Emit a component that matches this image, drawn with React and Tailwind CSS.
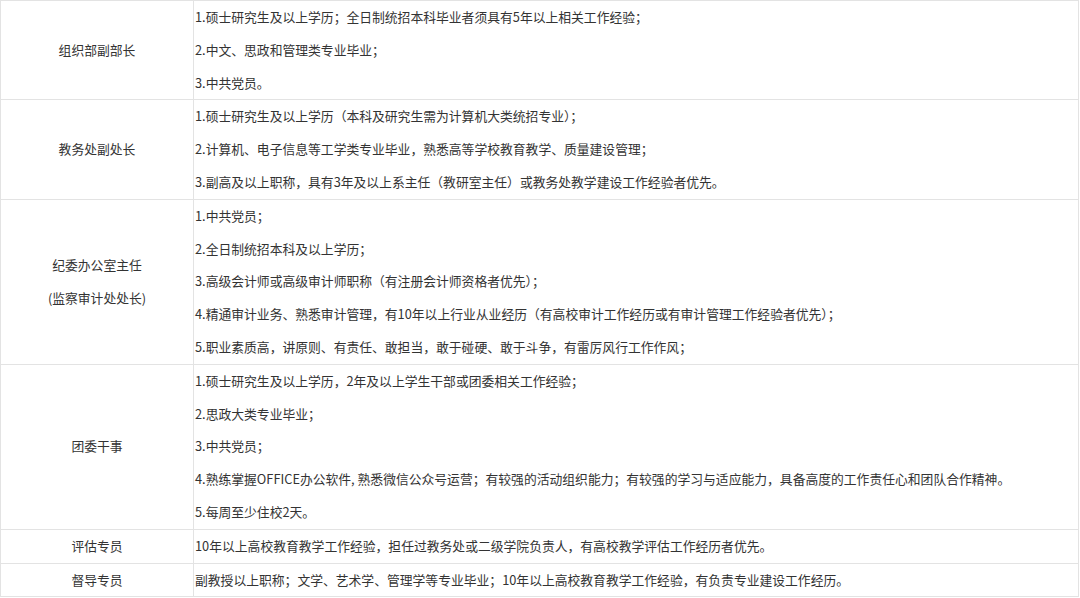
import React from "react";

const rows = [
  {
    title: ["组织部副部长"],
    items: [
      "1.硕士研究生及以上学历；全日制统招本科毕业者须具有5年以上相关工作经验；",
      "2.中文、思政和管理类专业毕业；",
      "3.中共党员。",
    ],
  },
  {
    title: ["教务处副处长"],
    items: [
      "1.硕士研究生及以上学历（本科及研究生需为计算机大类统招专业）；",
      "2.计算机、电子信息等工学类专业毕业，熟悉高等学校教育教学、质量建设管理；",
      "3.副高及以上职称，具有3年及以上系主任（教研室主任）或教务处教学建设工作经验者优先。",
    ],
  },
  {
    title: ["纪委办公室主任", "(监察审计处处长)"],
    items: [
      "1.中共党员；",
      "2.全日制统招本科及以上学历；",
      "3.高级会计师或高级审计师职称（有注册会计师资格者优先）；",
      "4.精通审计业务、熟悉审计管理，有10年以上行业从业经历（有高校审计工作经历或有审计管理工作经验者优先）；",
      "5.职业素质高，讲原则、有责任、敢担当，敢于碰硬、敢于斗争，有雷厉风行工作作风；",
    ],
  },
  {
    title: ["团委干事"],
    items: [
      "1.硕士研究生及以上学历，2年及以上学生干部或团委相关工作经验；",
      "2.思政大类专业毕业；",
      "3.中共党员；",
      "4.熟练掌握OFFICE办公软件, 熟悉微信公众号运营；有较强的活动组织能力；有较强的学习与适应能力，具备高度的工作责任心和团队合作精神。",
      "5.每周至少住校2天。",
    ],
  },
  {
    title: ["评估专员"],
    items: ["10年以上高校教育教学工作经验，担任过教务处或二级学院负责人，有高校教学评估工作经历者优先。"],
  },
  {
    title: ["督导专员"],
    items: ["副教授以上职称；文学、艺术学、管理学等专业毕业；10年以上高校教育教学工作经验，有负责专业建设工作经历。"],
  },
];

export default function App() {
  return (
    <div className="bg-white w-[1080px] h-[598px] overflow-hidden text-[12.8px] text-[#333] font-['Microsoft_YaHei','Noto_Sans_CJK_SC',sans-serif]">
      <table className="w-[1079px] border-collapse table-fixed">
        <colgroup>
          <col className="w-[193px]" />
          <col />
        </colgroup>
        <tbody>
          {rows.map((row, i) => (
            <tr key={i}>
              <td className="border border-[#e3e3e3] text-center align-middle p-0">
                {row.title.map((t) => (
                  <p key={t} className="h-[32.8px] leading-[32.8px]">{t}</p>
                ))}
              </td>
              <td className="border border-[#e3e3e3] align-middle pl-[1px] py-0 pr-0">
                {row.items.map((t) => (
                  <p key={t} className="h-[32.8px] leading-[32.8px] whitespace-nowrap">{t}</p>
                ))}
              </td>
            </tr>
          ))}
        </tbody>
      </table>
    </div>
  );
}
